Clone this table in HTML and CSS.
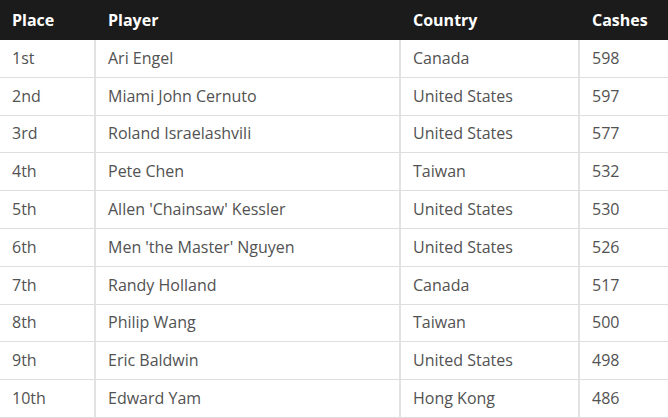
FILE: index.html
```html
<!DOCTYPE html>
<html>
<head>
<meta charset="utf-8">
<link rel="stylesheet" href="styles.css">
</head>
<body>
<table class="ranking">
  <colgroup>
    <col class="c-place"><col class="c-player"><col class="c-country"><col class="c-cashes">
  </colgroup>
  <thead>
    <tr><th>Place</th><th>Player</th><th>Country</th><th>Cashes</th></tr>
  </thead>
  <tbody>
    <tr><td>1st</td><td>Ari Engel</td><td>Canada</td><td>598</td></tr>
    <tr><td>2nd</td><td>Miami John Cernuto</td><td>United States</td><td>597</td></tr>
    <tr><td>3rd</td><td>Roland Israelashvili</td><td>United States</td><td>577</td></tr>
    <tr><td>4th</td><td>Pete Chen</td><td>Taiwan</td><td>532</td></tr>
    <tr><td>5th</td><td>Allen 'Chainsaw' Kessler</td><td>United States</td><td>530</td></tr>
    <tr><td>6th</td><td>Men 'the Master' Nguyen</td><td>United States</td><td>526</td></tr>
    <tr><td>7th</td><td>Randy Holland</td><td>Canada</td><td>517</td></tr>
    <tr><td>8th</td><td>Philip Wang</td><td>Taiwan</td><td>500</td></tr>
    <tr><td>9th</td><td>Eric Baldwin</td><td>United States</td><td>498</td></tr>
    <tr><td>10th</td><td>Edward Yam</td><td>Hong Kong</td><td>486</td></tr>
  </tbody>
</table>
</body>
</html>
```
FILE: styles.css
```css
html, body {
  margin: 0;
  padding: 0;
  background: #fff;
}
.ranking {
  width: 668px;
  border-collapse: separate;
  border-spacing: 0;
  table-layout: fixed;
  font-family: "Open Sans", "Liberation Sans", sans-serif;
  font-size: 16px;
}
.c-place { width: 94px; }
.c-player { width: 305px; }
.c-country { width: 179px; }
.c-cashes { width: 90px; }
.ranking th {
  background: #1b1b1b;
  color: #fff;
  font-weight: 700;
  text-align: left;
  height: 40px;
  padding: 0 12px 1px;
  box-sizing: border-box;
  border: none;
}
.ranking th + th { padding-left: 14px; }
.ranking td {
  height: 37.8px;
  padding: 0 12px 1px;
  color: #525252;
  border-bottom: 1px solid #dedede;
  box-sizing: border-box;
}
.ranking td + td {
  border-left: 2px solid #e2e2e2;
}
```
